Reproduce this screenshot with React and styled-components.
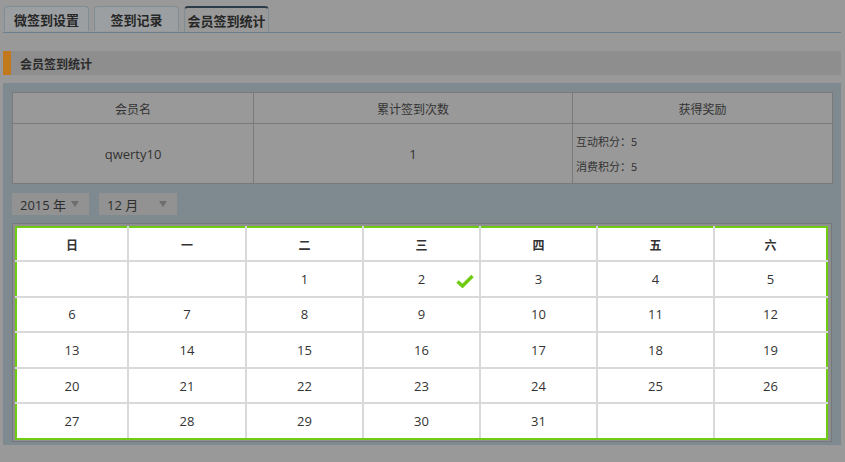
import React from 'react'
import styled, { createGlobalStyle } from 'styled-components'

const GlobalStyle = createGlobalStyle`
  html, body {
    margin: 0;
    padding: 0;
    background: #999999;
  }
  body {
    font-family: "Noto Sans CJK SC", "Open Sans", sans-serif;
    color: #333;
  }
`

const Page = styled.div`
  width: 838px;
  padding: 6px 0 0 3px;
  box-sizing: content-box;
`

const TabBar = styled.div`
  display: flex;
  gap: 5px;
  padding-left: 1px;
  height: 26px;
  border-bottom: 1px solid #6c7f8c;
`

const Tab = styled.div`
  width: 85px;
  height: ${(p) => (p.active ? '26px' : '25px')};
  box-sizing: border-box;
  display: flex;
  align-items: center;
  justify-content: center;
  font-size: 13px;
  font-weight: 700;
  color: #262626;
  background: ${(p) => (p.active ? '#999999' : '#9c9fa1')};
  border: 1px solid #7f8d96;
  border-top: ${(p) => (p.active ? '2px solid #2c3b48' : '1px solid #7f8d96')};
  border-bottom: none;
  border-radius: 4px 4px 0 0;
  margin-bottom: ${(p) => (p.active ? '-1px' : '0')};
`

const SectionHeader = styled.div`
  margin-top: 18px;
  height: 24px;
  display: flex;
  align-items: center;
  background: #8e8e8e;
  border-left: 8px solid #c2791c;
  padding-left: 9px;
  font-size: 12px;
  font-weight: 700;
  color: #2b2b2b;
`

const Panel = styled.div`
  margin-top: 8px;
  background: #7f8a90;
  padding: 9px 9px 3px 9px;
`

const StatTable = styled.table`
  width: 821px;
  border-collapse: collapse;
  table-layout: fixed;
  background: #999999;
  font-size: 12px;
  color: #333;
  td, th {
    border: 1px solid #7a7a7a;
    padding: 0;
  }
  th {
    height: 30px;
    font-weight: 400;
    text-align: center;
  }
  td {
    height: 59px;
    text-align: center;
    font-size: 13px;
    font-family: "Open Sans", "Noto Sans CJK SC", sans-serif;
  }
`

const RewardCell = styled.td`
  && {
    text-align: left;
    padding-left: 3px;
    font-size: 11px;
  }
`

const RewardLine = styled.div`
  line-height: 25px;
  font-family: "Noto Sans CJK SC", "Open Sans", sans-serif;
`

const Filters = styled.div`
  display: flex;
  gap: 10px;
  margin-top: 9px;
`

const Select = styled.div`
  width: ${(p) => p.w}px;
  height: 22px;
  box-sizing: border-box;
  background: #929292;
  display: flex;
  align-items: center;
  justify-content: space-between;
  padding: 0 10px 0 8px;
  font-size: 13px;
  font-family: "Open Sans", "Noto Sans CJK SC", sans-serif;
  color: #2e2e2e;
`

const Caret = styled.span`
  width: 0;
  height: 0;
  border-left: 4px solid transparent;
  border-right: 4px solid transparent;
  border-top: 6px solid #6e6e6e;
`

const CalendarWrap = styled.div`
  margin-top: 8px;
  width: 820px;
  height: 219px;
  box-sizing: border-box;
  background: #8f8f8f;
  border: 1px solid #73797c;
  padding: 2px 0 0 2px;
`

const Calendar = styled.table`
  width: 811px;
  border-collapse: collapse;
  background: #ffffff;
  font-family: "Open Sans", "Noto Sans CJK SC", sans-serif;
  font-size: 13px;
  color: #333;
  table-layout: fixed;
  th, td {
    border: 2px solid #d9d9d9;
    text-align: center;
    padding: 0;
  }
  th {
    height: 32px;
    font-weight: 700;
    font-family: "Noto Sans CJK SC", sans-serif;
    font-size: 12px;
  }
  td {
    height: 33.6px;
  }
  tr:first-child th {
    border-top-color: #6fcc12;
  }
  tbody tr:last-child td {
    border-bottom-color: #6fcc12;
  }
  tr th:first-child, tr td:first-child {
    border-left-color: #6fcc12;
  }
  tr th:last-child, tr td:last-child {
    border-right-color: #6fcc12;
  }
`

const DayCell = styled.td`
  position: relative;
`

const Check = styled.svg`
  position: absolute;
  right: 5px;
  top: 12px;
`

const weekdays = ['日', '一', '二', '三', '四', '五', '六']
const colWidths = [112, 118, 117, 117, 117, 117, 113]
const weeks = [
  [null, null, 1, 2, 3, 4, 5],
  [6, 7, 8, 9, 10, 11, 12],
  [13, 14, 15, 16, 17, 18, 19],
  [20, 21, 22, 23, 24, 25, 26],
  [27, 28, 29, 30, 31, null, null],
]
const signed = [2]

const App = () => {
  return (
    <Page>
      <GlobalStyle />
      <TabBar>
        <Tab>微签到设置</Tab>
        <Tab>签到记录</Tab>
        <Tab active>会员签到统计</Tab>
      </TabBar>
      <SectionHeader>会员签到统计</SectionHeader>
      <Panel>
        <StatTable>
          <colgroup>
            <col style={{ width: 241 }} />
            <col style={{ width: 319 }} />
            <col />
          </colgroup>
          <thead>
            <tr>
              <th>会员名</th>
              <th>累计签到次数</th>
              <th>获得奖励</th>
            </tr>
          </thead>
          <tbody>
            <tr>
              <td>qwerty10</td>
              <td>1</td>
              <RewardCell>
                <RewardLine>互动积分：5</RewardLine>
                <RewardLine>消费积分：5</RewardLine>
              </RewardCell>
            </tr>
          </tbody>
        </StatTable>
        <Filters>
          <Select w={77}>
            2015 年<Caret />
          </Select>
          <Select w={78}>
            12 月<Caret />
          </Select>
        </Filters>
        <CalendarWrap>
          <Calendar>
            <colgroup>
              {colWidths.map((w, i) => (
                <col key={i} style={{ width: w }} />
              ))}
            </colgroup>
            <thead>
              <tr>
                {weekdays.map((d) => (
                  <th key={d}>{d}</th>
                ))}
              </tr>
            </thead>
            <tbody>
              {weeks.map((week, i) => (
                <tr key={i}>
                  {week.map((day, j) => (
                    <DayCell key={j}>
                      {day}
                      {signed.includes(day) && (
                        <Check width="18" height="14" viewBox="0 0 18 14">
                          <path
                            d="M1.5 7.5 L6.5 12 L16.5 2"
                            fill="none"
                            stroke="#6fcc12"
                            strokeWidth="3.5"
                          />
                        </Check>
                      )}
                    </DayCell>
                  ))}
                </tr>
              ))}
            </tbody>
          </Calendar>
        </CalendarWrap>
      </Panel>
    </Page>
  )
}

export default App
